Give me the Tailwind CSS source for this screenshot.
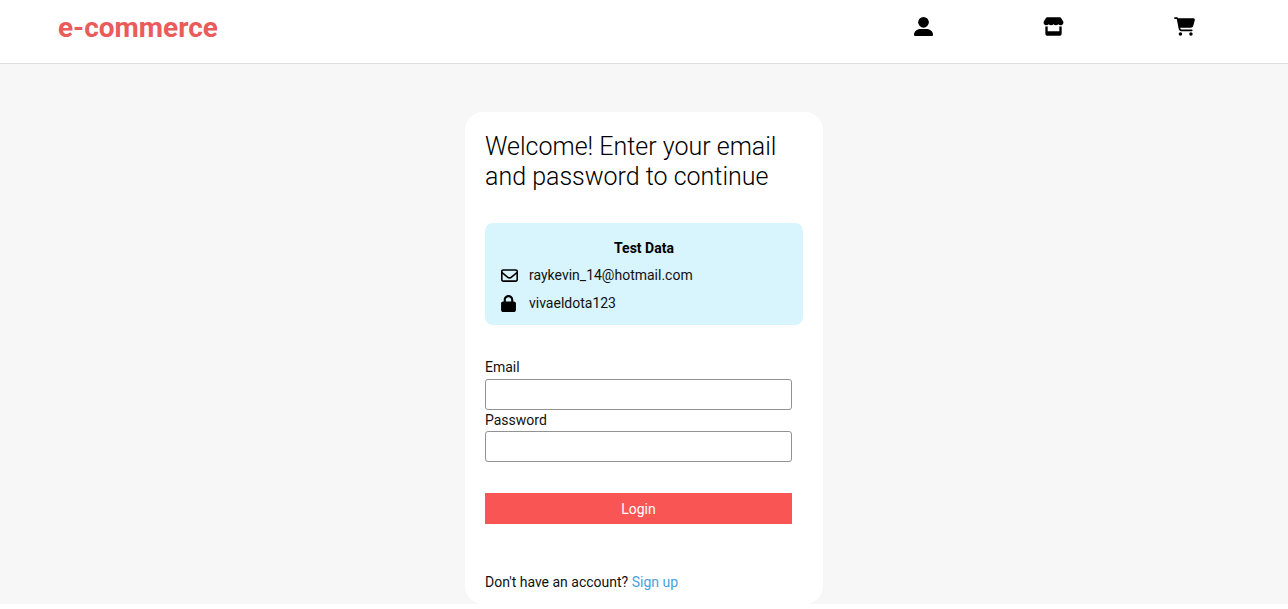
<!DOCTYPE html>
<html lang="en">
<head>
<meta charset="utf-8">
<meta name="viewport" content="width=device-width, initial-scale=1">
<title>e-commerce</title>
<script src="https://cdn.jsdelivr.net/npm/@tailwindcss/browser@4"></script>
</head>
<body class="bg-white font-[Roboto,sans-serif] text-sm text-[#111]">
<header class="flex h-16 items-start justify-between border-b border-[#dedede] bg-white pl-[58px] pr-[93px]">
  <a href="#" class="mt-2 text-[28px] leading-10 font-bold text-[#ea5b5b]">e-commerce</a>
  <nav class="mt-4 flex gap-[110px] text-black">
    <a href="#" aria-label="Account" class="flex h-[21px] items-center"><svg class="h-[19px] w-[19px]" viewBox="0 0 57 57" fill="currentColor"><circle cx="28.5" cy="16" r="16"/><path d="M20 36H37C49 36 57 44 57 53C57 56 55 57 53 57H4C2 57 0 56 0 53C0 44 8 36 20 36Z"/></svg></a>
    <a href="#" aria-label="Store" class="flex h-[21px] items-center"><svg class="h-[19px] w-[21px]" viewBox="0 0 576 512" fill="currentColor"><path d="M547.6 103.8L490.3 13.1C485.2 5 476.1 0 466.4 0H109.6C99.9 0 90.8 5 85.7 13.1L28.3 103.8c-29.6 46.8-3.4 111.9 51.9 119.4c4 .5 8.1 .8 12.1 .8c26.1 0 49.3-11.4 65.2-29c15.9 17.6 39.1 29 65.2 29c26.1 0 49.3-11.4 65.2-29c15.9 17.6 39.1 29 65.2 29c26.2 0 49.3-11.4 65.2-29c16 17.6 39.1 29 65.2 29c4.1 0 8.1-.3 12.1-.8c55.5-7.4 81.8-72.5 52.1-119.4zM499.7 254.9l-.1 0c-5.3 .7-10.7 1.1-16.2 1.1c-12.4 0-24.3-1.9-35.4-5.3V384H128V250.6c-11.2 3.5-23.2 5.4-35.6 5.4c-5.5 0-11-.4-16.3-1.1l-.1 0c-4.1-.6-8.1-1.3-12-2.3V448c0 35.3 28.7 64 64 64H448c35.3 0 64-28.7 64-64V252.6c-4 1-8 1.8-12.3 2.3z"/></svg></a>
    <a href="#" aria-label="Cart" class="flex h-[21px] items-center"><svg class="h-[19px] w-[21px]" viewBox="0 0 576 512" fill="currentColor"><path d="M0 24C0 10.700 10.700 0 24 0H69.500c22 0 41.500 12.800 50.600 32h411c26.300 0 45.500 25 38.600 50.400l-41 152.300c-8.500 31.400-37 53.300-69.500 53.300H170.700l5.400 28.500c2.200 11.300 12.100 19.500 23.600 19.500H488c13.300 0 24 10.700 24 24s-10.700 24-24 24H199.700c-34.600 0-64.300-24.600-70.700-58.500L77.400 54.500c-.7-3.800-4-6.500-7.900-6.500H24C10.700 48 0 37.300 0 24zM128 464a48 48 0 1 1 96 0 48 48 0 1 1 -96 0zm336-48a48 48 0 1 1 0 96 48 48 0 1 1 0-96z"/></svg></a>
  </nav>
</header>
<main class="flex justify-center bg-[#f7f7f7] pt-12">
  <section class="w-full max-w-[358px] rounded-[18px] bg-white px-5 pt-5 pb-3">
    <h1 class="text-[25px] leading-[30px] font-light text-black">Welcome! Enter your email and password to continue</h1>
    <div class="mt-[31px] rounded-lg bg-[#d8f4fd] px-4 pt-4 pb-3">
      <h2 class="text-center leading-[18px] font-bold text-black">Test Data</h2>
      <p class="mt-2 flex h-5 items-center"><svg class="mr-[11px] size-[17px]" viewBox="0 0 512 512" fill="#000"><path d="M64 112c-8.800 0-16 7.200-16 16v22.100L220.500 291.700c20.700 17 50.400 17 71.100 0L464 150.100V128c0-8.800-7.200-16-16-16H64zM48 212.200V384c0 8.800 7.200 16 16 16H448c8.800 0 16-7.200 16-16V212.200L322 328.800c-38.400 31.500-93.700 31.500-132 0L48 212.200zM0 128C0 92.700 28.700 64 64 64H448c35.300 0 64 28.700 64 64V384c0 35.300-28.700 64-64 64H64c-35.300 0-64-28.700-64-64V128z"/></svg>raykevin_14@hotmail.com</p>
      <p class="mt-2 flex h-5 items-center"><svg class="mr-[13px] h-[17px] w-[15px]" viewBox="0 0 448 512" fill="#000"><path d="M144 144v48H304V144c0-44.200-35.800-80-80-80s-80 35.800-80 80zM80 192V144C80 64.500 144.500 0 224 0s144 64.500 144 144v48h16c35.300 0 64 28.700 64 64V448c0 35.300-28.700 64-64 64H64c-35.300 0-64-28.700-64-64V256c0-35.300 28.700-64 64-64H80z"/></svg>vivaeldota123</p>
    </div>
    <form class="mr-[11px] mt-8">
      <label for="email" class="block leading-[21px]">Email</label>
      <input id="email" type="email" class="mt-px block h-[31px] w-full rounded-[3px] border border-[#929292] bg-white px-2">
      <label for="password" class="block leading-5">Password</label>
      <input id="password" type="password" class="mt-px block h-[31px] w-full rounded-[3px] border border-[#929292] bg-white px-2">
      <button type="submit" class="mt-[31px] block h-[31px] w-full bg-[#fa5555] text-white">Login</button>
    </form>
    <p class="mt-12 leading-5">Don't have an account? <a href="#" class="text-[#479fe0]">Sign up</a></p>
  </section>
</main>
</body>
</html>
